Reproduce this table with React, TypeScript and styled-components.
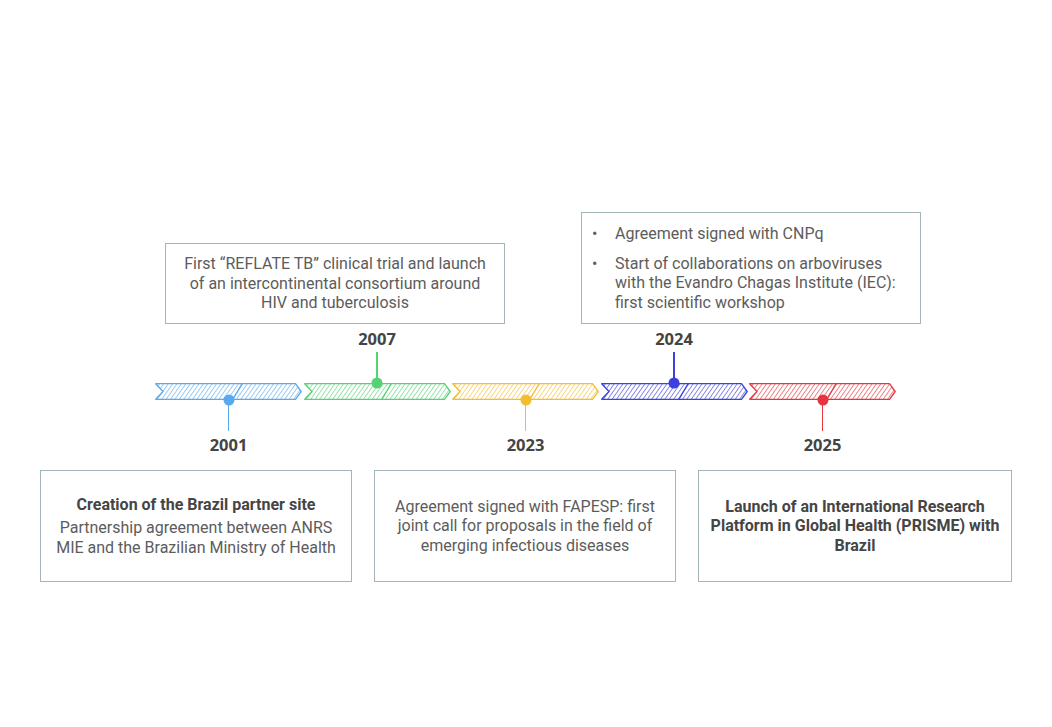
import React from 'react';
import styled, { createGlobalStyle } from 'styled-components';

const GlobalStyle = createGlobalStyle`
  body {
    margin: 0;
    background: #fff;
    font-family: Roboto, "Liberation Sans", sans-serif;
  }
`;

const Page = styled.main`
  box-sizing: border-box;
  height: 727px;
  padding-top: 212px;
`;

const CardRow = styled.div<{ $gap: number; $left: number }>`
  align-items: flex-end;
  display: flex;
  gap: ${(p) => p.$gap}px;
  padding-left: ${(p) => p.$left}px;
`;

const Card = styled.div<{ $w: number; $h: number; $pad: number }>`
  border: 1px solid #a3b7bb;
  box-sizing: border-box;
  color: #5c5c5c;
  display: flex;
  flex-direction: column;
  font-size: 16px;
  height: ${(p) => p.$h}px;
  justify-content: center;
  line-height: 19.5px;
  padding: 0 ${(p) => p.$pad}px;
  text-align: center;
  width: ${(p) => p.$w}px;
`;

const CardTitle = styled.div`
  color: #454545;
  font-weight: 700;
  margin-bottom: 4px;
`;

const BoldText = styled.div`
  color: #454545;
  font-weight: 700;
`;

const BulletList = styled.ul`
  display: flex;
  flex-direction: column;
  gap: 10px;
  list-style: none;
  margin: 0;
  padding: 0;
  text-align: left;
`;

const Bullet = styled.li`
  padding-left: 22px;
  position: relative;

  &::before {
    content: '•';
    left: -1px;
    position: absolute;
    top: 0;
  }
`;

const Timeline = styled.div`
  display: flex;
  gap: 1.5px;
  padding-left: 155px;
`;

const Segment = styled.div`
  display: flex;
  flex-direction: column;
  width: 147px;
`;

const Above = styled.div`
  align-items: center;
  display: flex;
  flex-direction: column;
  height: 59px;
  justify-content: flex-end;
`;

const Below = styled.div`
  align-items: center;
  display: flex;
  flex-direction: column;
  height: 70px;
`;

const Year = styled.div`
  color: #444;
  font-family: "Open Sans", "DejaVu Sans", sans-serif;
  font-size: 16.5px;
  font-weight: 700;
  line-height: 20px;
`;

const Stem = styled.div<{ $color: string; $h: number }>`
  background: ${(p) => p.$color};
  height: ${(p) => p.$h}px;
  width: 1.6px;
`;

const Bar = styled.div`
  height: 17px;
  position: relative;

  svg {
    display: block;
  }
`;

const Dot = styled.span<{ $color: string; $up: boolean }>`
  background: ${(p) => p.$color};
  border-radius: 50%;
  height: 11px;
  left: 50%;
  position: absolute;
  top: ${(p) => (p.$up ? 0 : 17)}px;
  transform: translate(-50%, -50%);
  width: 11px;
`;

// hatched chevron band; the middle stroke splits it in two like the original
const Arrow: React.FC<{ id: string; color: string }> = ({ id, color }) => (
  <svg width="147" height="17" viewBox="0 0 147 17">
    <defs>
      <pattern id={id} width="3.6" height="4" patternUnits="userSpaceOnUse" patternTransform="rotate(35)">
        <line x1="0" y1="0" x2="0" y2="4" stroke={color} strokeWidth="1.4" strokeOpacity="0.85" />
      </pattern>
    </defs>
    <polygon
      points="0.7,0.7 140.5,0.7 146.2,8.5 140.5,16.3 0.7,16.3 8,8.5"
      fill={`url(#${id})`}
      stroke={color}
      strokeWidth="1.3"
      strokeLinejoin="round"
    />
    <line x1="78" y1="16.3" x2="87" y2="0.7" stroke={color} strokeWidth="1.3" />
  </svg>
);

type Milestone = { year: string; color: string; up: boolean };

const milestones: Milestone[] = [
  { year: '2001', color: '#5aa9ec', up: false },
  { year: '2007', color: '#55d374', up: true },
  { year: '2023', color: '#f4bd2e', up: false },
  { year: '2024', color: '#3c40dc', up: true },
  { year: '2025', color: '#e6353f', up: false },
];

const App: React.FC = () => (
  <Page>
    <GlobalStyle />
    <CardRow $gap={76} $left={165}>
      <Card $w={340} $h={81} $pad={10}>
        First “REFLATE TB” clinical trial and launch of an intercontinental consortium around HIV and tuberculosis
      </Card>
      <Card $w={340} $h={112} $pad={11}>
        <BulletList>
          <Bullet>Agreement signed with CNPq</Bullet>
          <Bullet>Start of collaborations on arboviruses with the Evandro Chagas Institute (IEC): first scientific workshop</Bullet>
        </BulletList>
      </Card>
    </CardRow>

    <Timeline>
      {milestones.map((m) => (
        <Segment key={m.year}>
          <Above>
            {m.up && (
              <>
                <Year>{m.year}</Year>
                <Stem $color={m.color} $h={31} style={{ marginTop: 3 }} />
              </>
            )}
          </Above>
          <Bar>
            <Arrow id={`hatch-${m.year}`} color={m.color} />
            <Dot $color={m.color} $up={m.up} />
          </Bar>
          <Below>
            {!m.up && (
              <>
                <Stem $color={m.color} $h={31} />
                <Year style={{ marginTop: 4 }}>{m.year}</Year>
              </>
            )}
          </Below>
        </Segment>
      ))}
    </Timeline>

    <CardRow $gap={22} $left={40}>
      <Card $w={312} $h={112} $pad={12}>
        <CardTitle>Creation of the Brazil partner site</CardTitle>
        Partnership agreement between ANRS MIE and the Brazilian Ministry of Health
      </Card>
      <Card $w={302} $h={112} $pad={8}>
        Agreement signed with FAPESP: first joint call for proposals in the field of emerging infectious diseases
      </Card>
      <Card $w={314} $h={112} $pad={2}>
        <BoldText>Launch of an International Research Platform in Global Health (PRISME) with Brazil</BoldText>
      </Card>
    </CardRow>
  </Page>
);

export default App;
